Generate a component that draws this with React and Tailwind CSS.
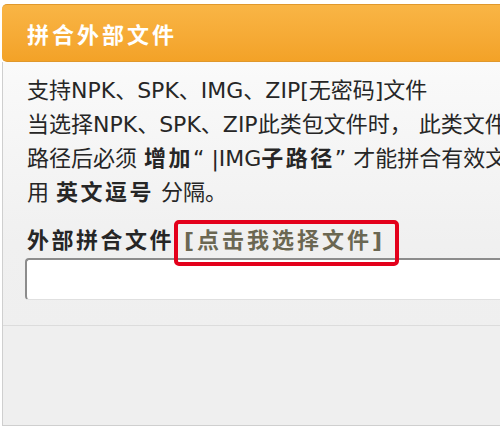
// Merge external file panel
const lines = [
  <>支持NPK、SPK、IMG、ZIP[无密码]文件</>,
  <>当选择NPK、SPK、ZIP此类包文件时， 此类文件需在文件</>,
  <>
    路径后必须 <b className="font-bold tracking-[2.5px]">增加</b>“ |IMG
    <b className="font-bold tracking-[2.5px]">子路径</b>” 才能拼合有效文件，多个文件请
  </>,
  <>
    用 <b className="font-bold tracking-[2.5px]">英文逗号</b> 分隔。
  </>,
];

export default function App() {
  return (
    <div className="w-[500px] h-[428px] overflow-hidden bg-white font-['DejaVu_Sans','Noto_Sans_CJK_SC',sans-serif]">
      <div className="pt-1 pl-[2px] w-[760px]">
        {/* Header bar */}
        <div className="h-[58px] rounded-l-[5px] bg-gradient-to-b from-[#f9b545] to-[#f3a227] border-y border-[#e0982c] flex items-center pl-[25px]">
          <span className="text-white font-bold text-[22px] tracking-[3px] font-['Noto_Sans_CJK_SC',sans-serif]">
            拼合外部文件
          </span>
        </div>

        {/* Body */}
        <div className="border-l border-b border-[#cfcfcf] bg-gradient-to-b from-[#fafafa] via-[#f0f0f0] to-[#eeeeee]">
          <div className="pt-3 pl-6 text-[22px] leading-[34px] text-[#262626]">
            {lines.map((line, i) => (
              <div key={i} className="whitespace-nowrap">
                {line}
              </div>
            ))}

            <div className="mt-[11px] whitespace-nowrap font-bold">
              <span className="tracking-[2.5px] font-['Noto_Sans_CJK_SC',sans-serif]">外部拼合文件</span>
              <span className="relative inline-block ml-[10px] text-[#6b6752] tracking-[3px]">
                [点击我选择文件]
                <span className="absolute -left-[10px] -right-[14px] -top-[4px] -bottom-[8px] border-4 border-[#e3001b] rounded-[5px]" />
              </span>
            </div>

            <div className="-ml-[2px] h-[42px] bg-white border-t-2 border-l-2 border-[#8c8c8c] border-b border-b-[#e0e0e0] rounded-l-[4px]" />
          </div>

          {/* Footer strip */}
          <div className="mt-[25px] h-[100px] border-t border-[#dcdcdc] bg-[#efefef]" />
        </div>
      </div>
    </div>
  );
}
